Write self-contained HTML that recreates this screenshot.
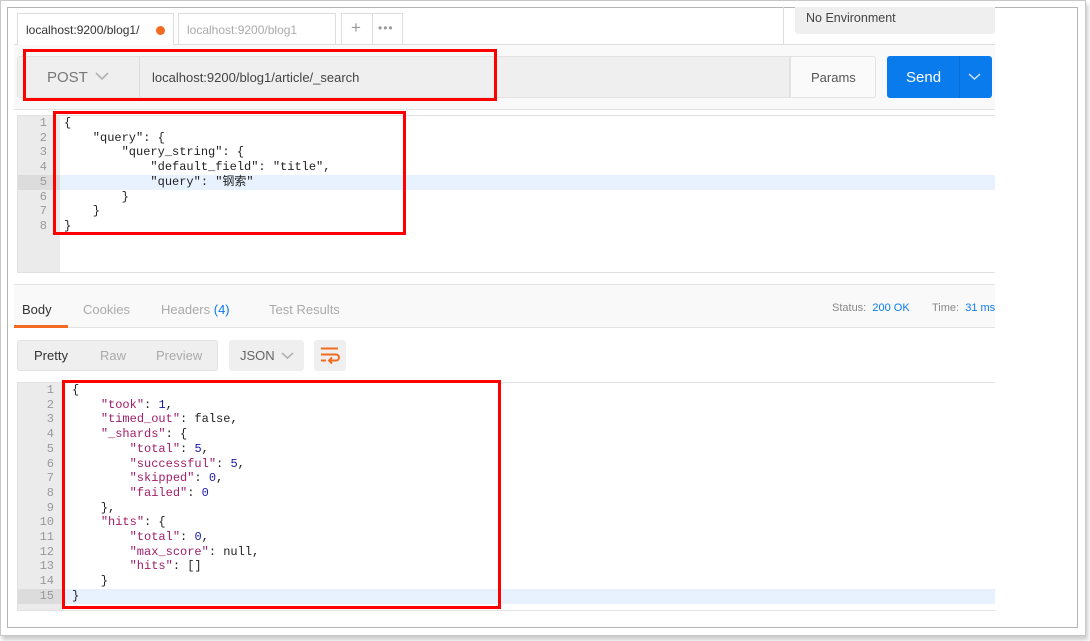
<!DOCTYPE html>
<html><head><meta charset="utf-8"><style>
*{box-sizing:border-box;margin:0;padding:0}
body{width:1090px;height:641px;background:#fff;position:relative;overflow:hidden;font-family:"Liberation Sans","Noto Sans CJK SC",sans-serif;font-size:13px;color:#333}
.a{position:absolute}
.mono{font-family:"Liberation Mono","Noto Sans CJK SC",monospace;font-size:12px;white-space:pre;line-height:14.7px}
.k{color:#a11d6a}.n{color:#1a1aa6}
.red{position:absolute;border:3px solid #f00}
</style></head><body>
<div class="a" style="left:0;top:0;width:1086px;height:636px;border:1px solid #c8c8c8;box-shadow:2px 4px 4px #ccc"></div>
<div class="a" style="left:7px;top:7px;width:1071px;height:621px;border:1px solid #b5b5b5;background:#fff"></div>

<div class="a" style="left:14px;top:44px;width:981px;height:1px;background:#ddd"></div>
<div class="a" style="left:17px;top:13px;width:157px;height:32px;border:1px solid #ddd;border-bottom:none;background:#fff;font-size:12px;padding:9px 8px;color:#333">localhost:9200/blog1/<span style="position:absolute;left:138px;top:12px;width:9px;height:9px;border-radius:50%;background:#f26b21"></span></div>
<div class="a" style="left:178px;top:13px;width:158px;height:31px;border:1px solid #ddd;border-bottom:none;font-size:12px;padding:9px 8px;color:#aaa">localhost:9200/blog1</div>
<div class="a" style="left:341px;top:13px;width:62px;height:31px;border:1px solid #ddd;border-bottom:none"></div>
<div class="a" style="left:372px;top:13px;width:1px;height:31px;background:#ddd"></div>
<div class="a" style="left:351px;top:18px;font-size:17px;color:#999">+</div>
<div class="a" style="left:378px;top:21px;font-size:12px;color:#999;letter-spacing:1px">•••</div>
<div class="a" style="left:783px;top:7px;width:1px;height:38px;background:#ddd"></div>
<div class="a" style="left:795px;top:7px;width:200px;height:27px;background:#efefef;border-radius:0 0 3px 3px;font-size:12.5px;padding:4px 11px;color:#444">No Environment</div>

<div class="a" style="left:14px;top:45px;width:981px;height:65px;background:#f9f9f9;border-bottom:1px solid #e2e2e2"></div>
<div class="a" style="left:17px;top:56px;width:773px;height:42px;background:#efefef;border:1px solid #e2e2e2;border-radius:3px 0 0 3px"></div>
<div class="a" style="left:139px;top:57px;width:1px;height:40px;background:#ddd"></div>
<div class="a" style="left:47px;top:69px;font-size:15px;color:#777">POST</div>
<svg class="a" style="left:95px;top:72px" width="14" height="9"><path d="M1 1l6 6 6-6" fill="none" stroke="#aaa" stroke-width="1.5"/></svg>
<div class="a" style="left:152px;top:70px;font-size:13px;color:#444">localhost:9200/blog1/article/_search</div>
<div class="a" style="left:790px;top:56px;width:86px;height:42px;background:#fafafa;border:1px solid #e2e2e2;border-radius:0 3px 3px 0;font-size:13px;color:#555;padding:13px 0 0 20px">Params</div>
<div class="a" style="left:887px;top:56px;width:105px;height:42px;background:#097bed;border-radius:3px"></div>
<div class="a" style="left:959px;top:56px;width:1px;height:42px;background:#0a6ccf"></div>
<div class="a" style="left:906px;top:69px;font-size:15px;color:#fff">Send</div>
<svg class="a" style="left:968px;top:73px" width="13" height="8"><path d="M1 1l5.5 5 5.5-5" fill="none" stroke="#cfe3fb" stroke-width="1.5"/></svg>

<div class="a" style="left:17px;top:115px;width:978px;height:158px;border:1px solid #e2e2e2;border-right:none;background:#fff"></div>
<div class="a" style="left:18px;top:116px;width:42px;height:156px;background:#ebebeb"></div>
<div class="a" style="left:18px;top:175px;width:977px;height:14.7px;background:#e8f2fe"></div>
<div class="a" style="left:18px;top:175px;width:42px;height:14.7px;background:#dcdcdc"></div>
<div class="a mono" style="left:18px;top:116px;width:29px;text-align:right;color:#999">1
2
3
4
5
6
7
8</div>
<div class="a mono" style="left:64px;top:116px;color:#222">{
    "query": {
        "query_string": {
            "default_field": "title",
            "query": "钢索"
        }
    }
}</div>

<div class="a" style="left:14px;top:284px;width:981px;height:44px;background:#f9f9f9;border-top:1px solid #e2e2e2;border-bottom:1px solid #e2e2e2"></div>
<div class="a" style="left:22px;top:302px;font-size:13px;color:#333">Body</div>
<div class="a" style="left:14px;top:325px;width:54px;height:3px;background:#f26b21"></div>
<div class="a" style="left:83px;top:302px;font-size:13px;color:#aaa">Cookies</div>
<div class="a" style="left:161px;top:302px;font-size:13px;color:#aaa">Headers <span style="color:#097bed">(4)</span></div>
<div class="a" style="left:269px;top:302px;font-size:13px;color:#aaa">Test Results</div>
<div class="a" style="left:832px;top:302px;font-size:11px;color:#888">Status: <span style="color:#097bed">&nbsp;200 OK</span></div>
<div class="a" style="left:932px;top:302px;font-size:11px;color:#888">Time: <span style="color:#097bed">&nbsp;31 ms</span></div>

<div class="a" style="left:17px;top:340px;width:201px;height:31px;background:#efefef;border:1px solid #e2e2e2;border-radius:3px"></div>
<div class="a" style="left:34px;top:348px;font-size:13px;color:#333">Pretty</div>
<div class="a" style="left:100px;top:348px;font-size:13px;color:#aaa">Raw</div>
<div class="a" style="left:156px;top:348px;font-size:13px;color:#aaa">Preview</div>
<div class="a" style="left:229px;top:340px;width:75px;height:31px;background:#efefef;border-radius:3px"></div>
<div class="a" style="left:240px;top:348px;font-size:13px;color:#666">JSON</div>
<svg class="a" style="left:281px;top:352px" width="13" height="8"><path d="M1 1l5.5 5 5.5-5" fill="none" stroke="#aaa" stroke-width="1.5"/></svg>
<div class="a" style="left:314px;top:340px;width:32px;height:31px;background:#efefef;border-radius:3px"></div>
<svg class="a" style="left:320px;top:346px" width="20" height="18"><path d="M1 2.5h17M1 8.5h15a3 3 0 0 1 0 6H10M12 11.5l-3 3 3 3M1 14.5h5" fill="none" stroke="#f26b21" stroke-width="2"/></svg>

<div class="a" style="left:17px;top:382px;width:978px;height:229px;border:1px solid #e2e2e2;border-right:none;background:#fff"></div>
<div class="a" style="left:18px;top:383px;width:44px;height:227px;background:#ebebeb"></div>
<div class="a" style="left:18px;top:589px;width:977px;height:14.7px;background:#e8f2fe"></div>
<div class="a" style="left:18px;top:589px;width:44px;height:14.7px;background:#dcdcdc"></div>
<div class="a mono" style="left:18px;top:383px;width:36px;text-align:right;color:#999">1
2
3
4
5
6
7
8
9
10
11
12
13
14
15</div>
<div class="a mono" style="left:72px;top:383px;color:#222">{
    <span class="k">"took"</span>: <span class="n">1</span>,
    <span class="k">"timed_out"</span>: false,
    <span class="k">"_shards"</span>: {
        <span class="k">"total"</span>: <span class="n">5</span>,
        <span class="k">"successful"</span>: <span class="n">5</span>,
        <span class="k">"skipped"</span>: <span class="n">0</span>,
        <span class="k">"failed"</span>: <span class="n">0</span>
    },
    <span class="k">"hits"</span>: {
        <span class="k">"total"</span>: <span class="n">0</span>,
        <span class="k">"max_score"</span>: null,
        <span class="k">"hits"</span>: []
    }
}</div>

<div class="red" style="left:23px;top:49px;width:474px;height:52px"></div>
<div class="red" style="left:53px;top:111px;width:353px;height:124px"></div>
<div class="red" style="left:62px;top:380px;width:439px;height:229px"></div>
</body></html>
